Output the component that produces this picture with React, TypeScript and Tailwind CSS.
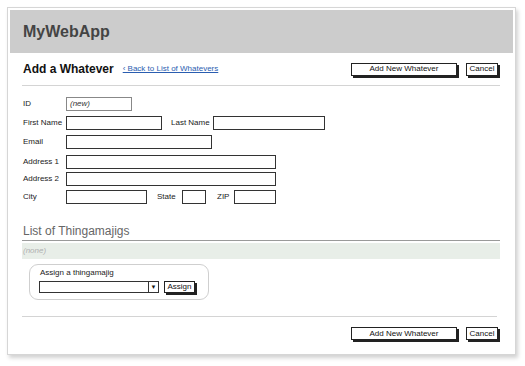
import React from "react";

const Btn = ({ w, label }: { w: string; label: string }) => (
  <div
    className={`${w} h-[13px] border border-[#222] bg-white shadow-[2px_2px_0_#222] flex items-center justify-center text-[8px] leading-none text-[#111]`}
  >
    {label}
  </div>
);

const Input = ({ w, children }: { w: string; children?: React.ReactNode }) => (
  <div className={`${w} h-[14px] border border-[#333] bg-white flex items-center pl-[3px] text-[8px] italic text-[#333]`}>
    {children}
  </div>
);

const Label = ({ w, children }: { w: string; children: React.ReactNode }) => (
  <div className={`${w} shrink-0 text-[8px] leading-none text-[#222]`}>{children}</div>
);

export default function App() {
  return (
    <div
      className="w-[525px] h-[366px] bg-white overflow-hidden pt-[7px] pl-[7px]"
      style={{ fontFamily: '"Liberation Sans", Arial, sans-serif' }}
    >
      <div className="w-[509px] h-[348px] border border-[#d6d6d6] shadow-[2px_3px_4px_rgba(0,0,0,0.18)] p-[2px] bg-white flex flex-col">
        <div className="h-[43px] bg-[#cccccc] flex items-center pl-[13px] shrink-0">
          <span className="text-[16px] font-bold text-[#444]">MyWebApp</span>
        </div>

        <div className="mt-[9px] h-[14px] flex items-center pl-[13px] pr-[15px]">
          <span className="text-[12px] font-bold text-[#111] leading-none">Add a Whatever</span>
          <span className="ml-[9px] text-[8px] text-[#2a5db0] underline leading-none">‹ Back to List of Whatevers</span>
          <div className="ml-auto flex items-center gap-[9px]">
            <Btn w="w-[106px]" label="Add New Whatever" />
            <Btn w="w-[32px]" label="Cancel" />
          </div>
        </div>

        <div className="mt-[9px] ml-[12px] mr-[13px] h-px bg-[#d4d4d4]" />

        <div className="pl-[13px] flex flex-col">
          <div className="mt-[11px] flex items-center">
            <Label w="w-[43px]">ID</Label>
            <div className="w-[66px] h-[14px] border border-[#888] bg-white flex items-center pl-[3px] text-[8px] italic text-[#333]">(new)</div>
          </div>
          <div className="mt-[5px] flex items-center">
            <Label w="w-[43px]">First Name</Label>
            <Input w="w-[96px]" />
            <div className="w-[9px]" />
            <Label w="w-[42px]">Last Name</Label>
            <Input w="w-[112px]" />
          </div>
          <div className="mt-[5px] flex items-center">
            <Label w="w-[43px]">Email</Label>
            <Input w="w-[146px]" />
          </div>
          <div className="mt-[6px] flex items-center">
            <Label w="w-[43px]">Address 1</Label>
            <Input w="w-[210px]" />
          </div>
          <div className="mt-[3px] flex items-center">
            <Label w="w-[43px]">Address 2</Label>
            <Input w="w-[210px]" />
          </div>
          <div className="mt-[4px] flex items-center">
            <Label w="w-[43px]">City</Label>
            <Input w="w-[81px]" />
            <div className="w-[10px]" />
            <Label w="w-[25px]">State</Label>
            <Input w="w-[24px]" />
            <div className="w-[11px]" />
            <Label w="w-[17px]">ZIP</Label>
            <Input w="w-[42px]" />
          </div>
        </div>

        <div className="mt-[20px] ml-[12px] mr-[13px] h-[17px] border-b border-[#9a9a9a] pl-[1px] text-[12px] leading-[14px] text-[#666]">
          List of Thingamajigs
        </div>
        <div className="mt-[2px] ml-[12px] mr-[13px] h-[16px] bg-[#e8eee8] pl-[1px] flex items-center text-[8px] italic text-[#b0b0b0]">
          (none)
        </div>

        <div className="mt-[5px] ml-[19px] w-[180px] h-[36px] rounded-[9px] border border-[#cfcfcf] pl-[9px] pt-[3px]">
          <div className="text-[8px] leading-[10px] text-[#222] pl-[1px]">Assign a thingamajig</div>
          <div className="mt-[3px] flex items-center">
            <div className="w-[120px] h-[12px] border border-[#333] flex justify-end">
              <div className="w-[10px] h-full border-l border-[#333] flex items-center justify-center text-[6px] leading-none text-[#111]">▼</div>
            </div>
            <div className="ml-[5px] w-[31px] h-[12px] border border-[#222] shadow-[2px_2px_0_#222] flex items-center justify-center text-[8px] leading-none text-[#111]">
              Assign
            </div>
          </div>
        </div>

        <div className="mt-[16px] ml-[12px] mr-[16px] h-px bg-[#d4d4d4]" />

        <div className="mt-[10px] flex items-center justify-end gap-[9px] pr-[15px]">
          <Btn w="w-[106px]" label="Add New Whatever" />
          <Btn w="w-[32px]" label="Cancel" />
        </div>
      </div>
    </div>
  );
}
